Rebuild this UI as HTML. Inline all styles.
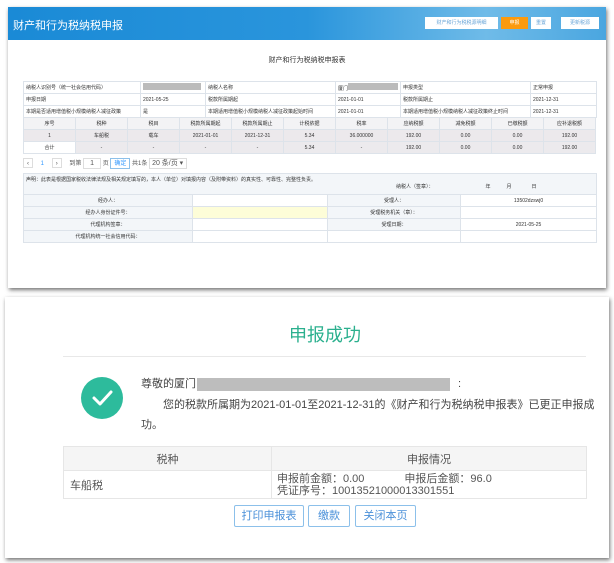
<!DOCTYPE html>
<html><head><meta charset="utf-8"><style>
*{margin:0;padding:0;box-sizing:border-box}
body{width:614px;height:563px;background:#fff;position:relative;overflow:hidden;font-family:"Liberation Sans","Noto Sans CJK SC",sans-serif;color:#333}
.a{position:absolute}
.p1{left:8px;top:7px;width:598px;height:281px;background:#fff;box-shadow:1px 2px 4px rgba(0,0,0,.55)}
.hd{left:0;top:0;width:598px;height:33px;background:linear-gradient(90deg,#1a8ad6 0%,#2a95dc 50%,#6fbbe8 80%,#4aa6e0 100%)}
.btn{position:absolute;top:10px;height:12px;background:#fff;color:#6aa6d8;font-size:5px;line-height:12px;text-align:center}
table{border-collapse:collapse;position:absolute;table-layout:fixed}
td{border:1px solid #dde3ea;font-size:5px;overflow:hidden;white-space:nowrap;padding:0 2px}
.t1 td{height:12px}
.c td{text-align:center}
.p2{left:5px;top:297px;width:604px;height:261px;background:#fff;box-shadow:1px 2px 4px rgba(0,0,0,.55)}
.rt td{border:1px solid #e6e6e6;font-size:11px;color:#555}
.b2{position:absolute;top:208px;height:22px;border:1px solid #8cc0ea;border-radius:2px;color:#4a90d9;font-size:11px;line-height:20px;text-align:center;background:#fff}
</style></head><body>
<div class="a p1">
 <div class="a hd"></div>
 <div class="a" style="left:5px;top:10px;color:#fff;font-size:11px">财产和行为税纳税申报</div>
 <div class="btn" style="left:417px;width:73px">财产和行为税税源明细</div>
 <div class="btn" style="left:493px;width:27px;background:#fb9a0e;color:#fff">申报</div>
 <div class="btn" style="left:523px;width:20px">重置</div>
 <div class="btn" style="left:553px;width:38px">更新税源</div>
 <div class="a" style="left:0;width:598px;top:48px;text-align:center;font-size:7px;color:#333">财产和行为税纳税申报表</div>
 <table class="t1" style="left:15px;top:74px;width:573px">
  <colgroup><col style="width:117px"><col style="width:65px"><col style="width:130px"><col style="width:65px"><col style="width:130px"><col style="width:66px"></colgroup>
  <tr><td>纳税人识别号（统一社会信用代码）</td><td><span style="display:inline-block;width:58px;height:7px;background:#bbb"></span></td><td>纳税人名称</td><td>厦门<span style="display:inline-block;width:50px;height:7px;background:#bbb"></span></td><td>申报类型</td><td>正常申报</td></tr>
  <tr><td>申报日期</td><td>2021-05-25</td><td>税款所属期起</td><td>2021-01-01</td><td>税款所属期止</td><td>2021-12-31</td></tr>
  <tr><td>本期是否适用增值税小规模纳税人减征政策</td><td>是</td><td>本期适用增值税小规模纳税人减征政策起始时间</td><td>2021-01-01</td><td>本期适用增值税小规模纳税人减征政策终止时间</td><td>2021-12-31</td></tr>
 </table>
 <table class="t1 c" style="left:15px;top:110px;width:573px">
  <tr style="background:#f3f3f5"><td>序号</td><td>税种</td><td>税目</td><td>税款所属期起</td><td>税款所属期止</td><td>计税依据</td><td>税率</td><td>应纳税额</td><td>减免税额</td><td>已缴税额</td><td>应补退税额</td></tr>
  <tr style="background:#ece9ec"><td>1</td><td>车船税</td><td>载车</td><td>2021-01-01</td><td>2021-12-31</td><td>5.34</td><td>36.000000</td><td>192.00</td><td>0.00</td><td>0.00</td><td>192.00</td></tr>
  <tr style="background:#eceaed"><td style="background:#fff">合计</td><td>-</td><td>-</td><td>-</td><td>-</td><td>5.34</td><td>-</td><td>192.00</td><td>0.00</td><td>0.00</td><td>192.00</td></tr>
 </table>
 <div class="a" style="left:15px;top:151px;font-size:6px;color:#555;line-height:10px">
  <span style="display:inline-block;width:10px;height:10px;border:1px solid #ddd;text-align:center">‹</span>
  <span style="color:#39f;margin:0 6px">1</span>
  <span style="display:inline-block;width:10px;height:10px;border:1px solid #ddd;text-align:center">›</span>
  <span style="margin-left:6px">到第</span>
  <span style="display:inline-block;width:18px;height:11px;border:1px solid #ddd;text-align:center;font-size:7px">1</span> 页
  <span style="display:inline-block;width:20px;height:11px;border:1px solid #8cc0ea;color:#39f;text-align:center">确定</span>
  共1条 <span style="display:inline-block;width:38px;height:11px;border:1px solid #ddd;font-size:7px;padding-left:2px">20 条/页 ▾</span>
 </div>
 <table class="t1" style="left:15px;top:166px;width:573px">
  <colgroup><col style="width:169px"><col style="width:135px"><col style="width:133px"><col style="width:136px"></colgroup>
  <tr style="background:#f3f6f9"><td colspan="4" style="height:21px;vertical-align:top;padding-top:2px">声明：此表是根据国家税收法律法规及相关规定填写的，本人（单位）对填报内容（及附带资料）的真实性、可靠性、完整性负责。<br><span style="margin-left:370px">纳税人（签章）：</span><span style="margin-left:52px">年</span><span style="margin-left:16px">月</span><span style="margin-left:20px">日</span></td></tr>
  <tr class="c"><td style="background:#f3f6f9">经办人：</td><td></td><td style="background:#f3f6f9">受理人：</td><td>13502dzswj0</td></tr>
  <tr class="c"><td style="background:#f3f6f9">经办人身份证件号：</td><td style="background:#fdfdd8"></td><td style="background:#f3f6f9">受理税务机关（章）：</td><td></td></tr>
  <tr class="c"><td style="background:#f3f6f9">代理机构签章：</td><td></td><td style="background:#f3f6f9">受理日期：</td><td>2021-05-25</td></tr>
  <tr class="c"><td style="background:#f3f6f9">代理机构统一社会信用代码：</td><td></td><td></td><td></td></tr>
 </table>
</div>
<div class="a p2">
 <div class="a" style="left:0;width:640px;top:24px;text-align:center;color:#2bb08e;font-size:18px">申报成功</div>
 <div class="a" style="left:58px;top:59px;width:523px;height:1px;background:#e8e8e8"></div>
 <div class="a" style="left:76px;top:80px;width:42px;height:42px;border-radius:50%;background:#2dbb9c"></div>
 <svg class="a" style="left:76px;top:80px" width="42" height="42"><path d="M13 21 L19 27 L30 15" fill="none" stroke="#fff" stroke-width="3" stroke-linecap="round" stroke-linejoin="round"/></svg>
 <div class="a" style="left:136px;top:78px;font-size:11px;color:#444">尊敬的厦门<span style="display:inline-block;width:253px;height:13px;background:#bdbdbd;vertical-align:middle;margin-left:1px"></span><span style="margin-left:8px">:</span></div>
 <div class="a" style="left:136px;top:98px;width:463px;font-size:11px;line-height:20px;color:#444;text-indent:22px;word-break:break-all">您的税款所属期为2021-01-01至2021-12-31的《财产和行为税纳税申报表》已更正申报成功。</div>
 <table class="rt" style="left:58px;top:149px;width:523px">
  <colgroup><col style="width:208px"><col style="width:315px"></colgroup>
  <tr style="background:#f5f5f5"><td style="height:24px;text-align:center">税种</td><td style="text-align:center">申报情况</td></tr>
  <tr><td style="height:28px;padding-left:6px">车船税</td><td style="padding-left:5px;line-height:12px">申报前金额：0.00<span style="margin-left:40px">申报后金额：96.0</span><br>凭证序号：10013521000013301551</td></tr>
 </table>
 <div class="b2" style="left:229px;width:70px">打印申报表</div>
 <div class="b2" style="left:303px;width:42px">缴款</div>
 <div class="b2" style="left:350px;width:61px">关闭本页</div>
</div>
</body></html>
